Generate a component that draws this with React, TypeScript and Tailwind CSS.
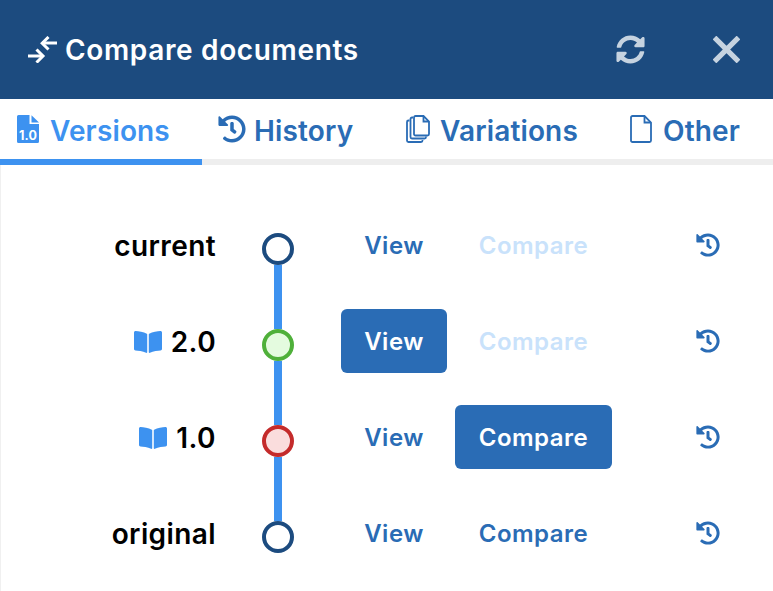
import { FaBookOpen, FaHistory, FaSyncAlt } from "react-icons/fa";

function CompressIcon() {
  return (
    <svg width="29" height="27" viewBox="0 0 29 27" fill="none" stroke="white" strokeWidth="3">
      <path d="M29 7H14" />
      <path d="M20.500 1l-6.300 6.200 6.300 6.300" />
      <path d="M0 20h15" />
      <path d="M8.500 13.500l6.500 6.500-6.500 6.500" />
    </svg>
  );
}

function CloseIcon() {
  return (
    <svg width="27" height="27" viewBox="0 0 27 27" fill="none" stroke="#c6d3e0" strokeWidth="5.200">
      <path d="M1.500 1.500l24 24M25.500 1.500l-24 24" />
    </svg>
  );
}

function VersionFile() {
  return (
    <svg width="22" height="28" viewBox="0 0 22 28" className="shrink-0">
      <path d="M1.500 0H12.500V9H22V26.500A1.500 1.500 0 0 1 20.500 28H1.500A1.500 1.500 0 0 1 0 26.500V1.500A1.500 1.500 0 0 1 1.500 0z" fill="#3d92f0" />
      <path d="M14.500 0.300L22 7.500H14.500z" fill="#3d92f0" />
      <text x="11" y="25" textAnchor="middle" fontSize="12.500" fontWeight="700" fill="white" fontFamily="Inter, sans-serif">1.0</text>
    </svg>
  );
}

function CopyIcon() {
  return (
    <svg width="24" height="28" viewBox="0 0 24 28" fill="none" stroke="currentColor" strokeWidth="1.800" className="shrink-0">
      <path d="M3.500 5.500H2.500A1.500 1.500 0 0 0 1 7V25.500A1.500 1.500 0 0 0 2.500 27H15A1.500 1.500 0 0 0 16.500 25.500V25" />
      <path d="M7 2.500H6A1.500 1.500 0 0 0 4.500 4V22A1.500 1.500 0 0 0 6 23.500H18.500A1.500 1.500 0 0 0 20 22V21.500" />
      <path d="M9.500 1H17.500L23 6.500V19A1.500 1.500 0 0 1 21.500 20.500H9.500A1.500 1.500 0 0 1 8 19V2.500A1.500 1.500 0 0 1 9.500 1z" fill="white" />
      <path d="M17.500 1V6.500H23" />
    </svg>
  );
}

function FileIcon() {
  return (
    <svg width="22" height="28" viewBox="0 0 22 28" fill="none" stroke="currentColor" strokeWidth="1.800" className="shrink-0">
      <path d="M2.500 1H14.500L21 7.500V25.500A1.500 1.500 0 0 1 19.500 27H2.500A1.500 1.500 0 0 1 1 25.500V2.500A1.500 1.500 0 0 1 2.500 1z" />
      <path d="M14.500 1V7.500H21" />
    </svg>
  );
}

function HistoryTab() {
  return <FaHistory size={28} className="shrink-0" />;
}

function Tab({ icon, label, width, inset, gap, active }: { icon: React.ReactNode; label: string; width: string; inset: string; gap: string; active?: boolean }) {
  return (
    <div className={`${width} ${inset} ${gap} h-[66px] flex items-center border-b-[6px] ${active ? "border-[#3d92f0] text-[#3d92f0]" : "border-[#eeeeee] text-[#2a6cb5]"}`}>
      {icon}
      <span className="pt-[3px]">{label}</span>
    </div>
  );
}

type Row = {
  label: string;
  book?: boolean;
  circle: string;
  view: string;
  compare: string;
};

const rows: Row[] = [
  { label: "current", circle: "border-[#1c4b7f] bg-white", view: "link", compare: "muted" },
  { label: "2.0", book: true, circle: "border-[#4fb03a] bg-[#e4fbdf]", view: "solid", compare: "muted" },
  { label: "1.0", book: true, circle: "border-[#c42b2b] bg-[#fadddd]", view: "link", compare: "solid" },
  { label: "original", circle: "border-[#1c4b7f] bg-white", view: "link", compare: "link" },
];

function Btn({ kind, width, children }: { kind: string; width: string; children: React.ReactNode }) {
  const cls = kind === "solid" ? "bg-[#2a6cb5] text-white" : kind === "muted" ? "text-[#c9e2fb]" : "text-[#2a6cb5]";
  return (
    <div className={`${width} h-[64px] mb-[8px] pt-[2px] rounded-[6px] flex items-center justify-center text-[24px] font-semibold tracking-[0.5px] ${cls}`}>
      {children}
    </div>
  );
}

export default function App() {
  return (
    <div className="w-[773px] h-[591px] bg-white overflow-hidden" style={{ fontFamily: "Inter, sans-serif" }}>
      <header className="h-[99px] bg-[#1c4b7f] flex items-center text-white">
        <div className="ml-[28px] mr-[8px] flex"><CompressIcon /></div>
        <div className="text-[28px] font-semibold tracking-[0.65px] flex-1">Compare documents</div>
        <FaSyncAlt className="text-[#c6d3e0] mr-[68px]" size={29} />
        <div className="mr-[33px] flex"><CloseIcon /></div>
      </header>
      <nav className="flex text-[28px] font-semibold tracking-[0.15px]">
        <Tab width="w-[202px]" inset="pl-[17px]" gap="gap-[11px]" active icon={<VersionFile />} label="Versions" />
        <Tab width="w-[188px]" inset="pl-[16px]" gap="gap-[8px]" icon={<HistoryTab />} label="History" />
        <Tab width="w-[218px]" inset="pl-[16px]" gap="gap-[10px]" icon={<CopyIcon />} label="Variations" />
        <Tab width="w-[165px]" inset="pl-[22px]" gap="gap-[11px]" icon={<FileIcon />} label="Other" />
      </nav>
      <main className="pt-[36px] h-[426px] border-l border-[#f0f0f0]">
        {rows.map((r, i) => (
          <div key={r.label} className="flex items-center h-[96px]">
            <div className="w-[215px] mb-[6px] flex items-center justify-end gap-[9px] text-[28px] font-semibold tracking-[0.4px] text-black">
              {r.book && <FaBookOpen className="text-[#3d92f0]" size={28} />}
              <span>{r.label}</span>
            </div>
            <div className="w-[124px] mr-[1px] h-full flex flex-col items-center">
              <div className={`flex-1 w-[8px] ${i > 0 ? "bg-[#3d92f0]" : ""}`} />
              <div className={`w-[32px] h-[32px] rounded-full border-[4px] shrink-0 ${r.circle}`} />
              <div className={`flex-1 w-[8px] ${i < rows.length - 1 ? "bg-[#3d92f0]" : ""}`} />
            </div>
            <Btn kind={r.view} width="w-[106px]">View</Btn>
            <div className="w-[8px]" />
            <Btn kind={r.compare} width="w-[157px]">Compare</Btn>
            <FaHistory className="text-[#2a6cb5] ml-[84px] mb-[8px]" size={24} />
          </div>
        ))}
      </main>
    </div>
  );
}
